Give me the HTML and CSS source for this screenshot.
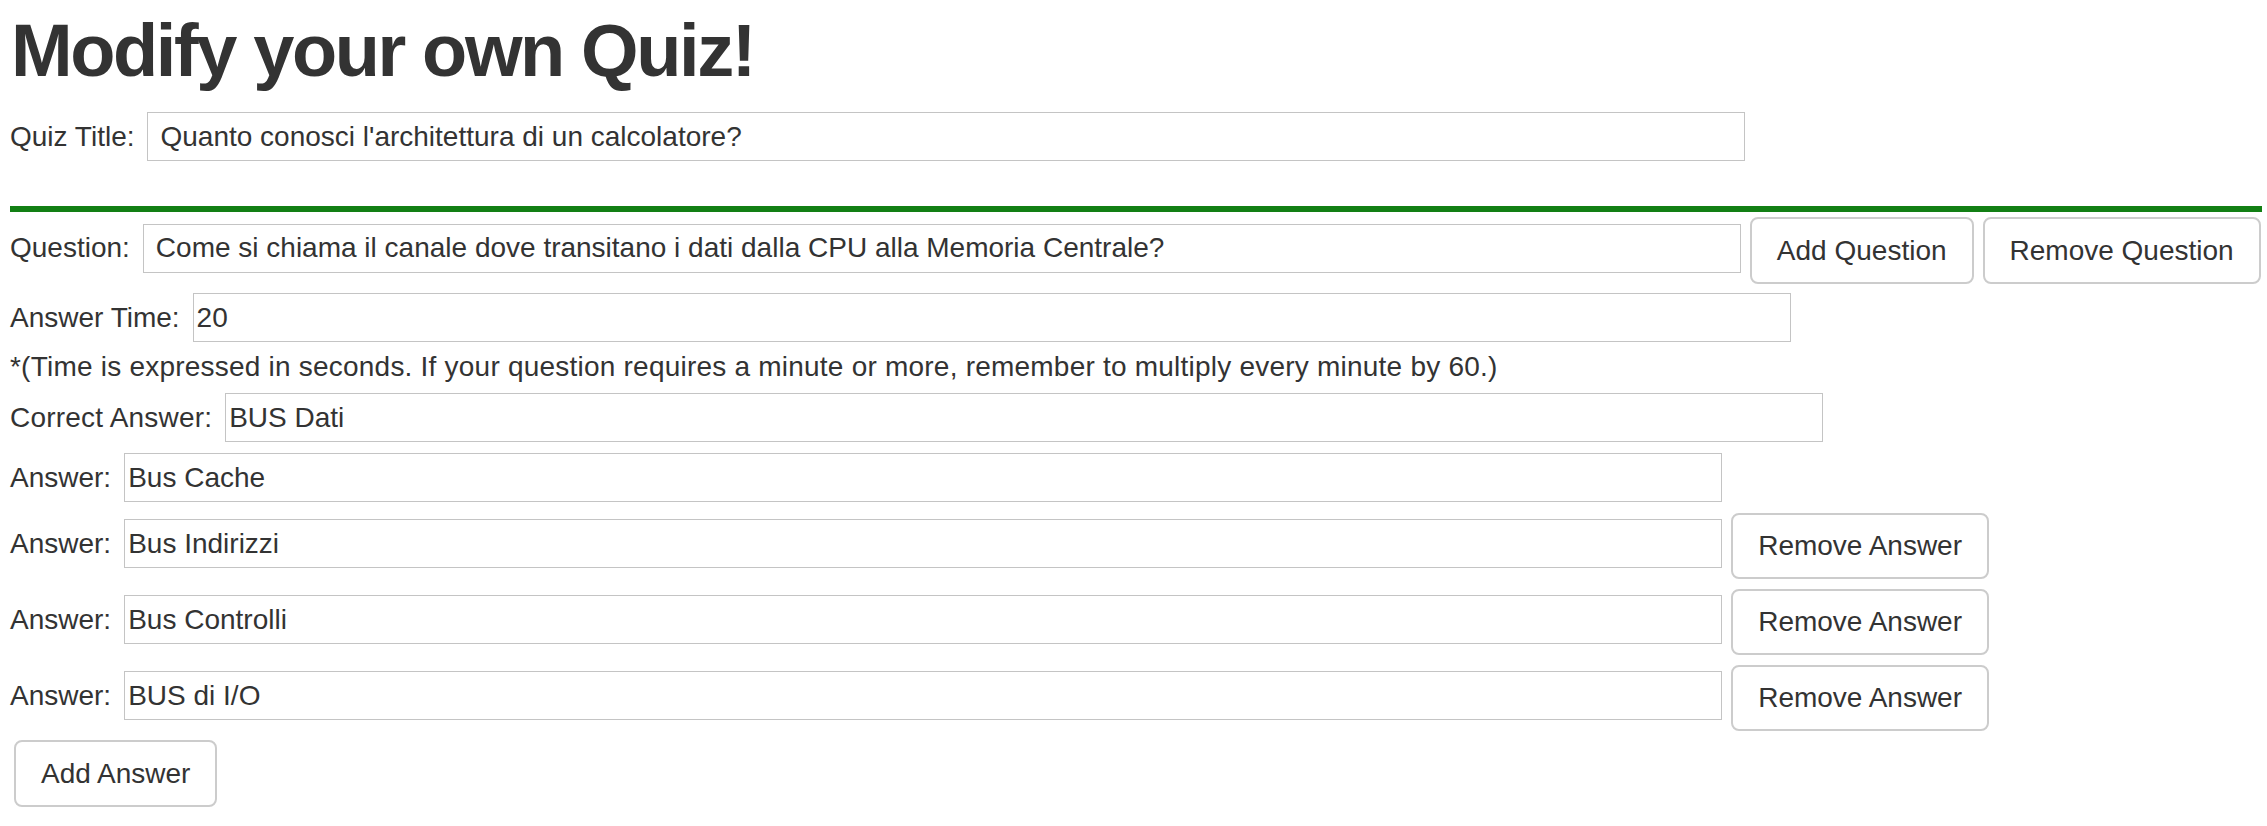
FILE: index.html
```html
<!DOCTYPE html>
<html lang="en">
<head>
<meta charset="utf-8">
<title>Modify your own Quiz!</title>
<link rel="stylesheet" href="styles.css">
</head>
<body>
<h1 class="page-title">Modify your own Quiz!</h1>
<div class="row row-title">
  <label class="lbl">Quiz Title:</label>
  <input class="field field-wide" type="text" value="Quanto conosci l'architettura di un calcolatore?">
</div>
<hr class="divider">
<div class="row row-question">
  <label class="lbl">Question:</label>
  <input class="field field-wide" type="text" value="Come si chiama il canale dove transitano i dati dalla CPU alla Memoria Centrale?">
  <button class="btn" type="button">Add Question</button>
  <button class="btn" type="button">Remove Question</button>
</div>
<div class="row row-time">
  <label class="lbl">Answer Time:</label>
  <input class="field" type="text" value="20">
</div>
<div class="note">*(Time is expressed in seconds. If your question requires a minute or more, remember to multiply every minute by 60.)</div>
<div class="row row-correct">
  <label class="lbl lbl-correct">Correct Answer:</label>
  <input class="field" type="text" value="BUS Dati">
</div>
<div class="row row-answer-first">
  <label class="lbl">Answer:</label>
  <input class="field" type="text" value="Bus Cache">
</div>
<div class="row row-answer">
  <label class="lbl">Answer:</label>
  <input class="field" type="text" value="Bus Indirizzi">
  <button class="btn btn-offset" type="button">Remove Answer</button>
</div>
<div class="row row-answer">
  <label class="lbl">Answer:</label>
  <input class="field" type="text" value="Bus Controlli">
  <button class="btn btn-offset" type="button">Remove Answer</button>
</div>
<div class="row row-answer">
  <label class="lbl">Answer:</label>
  <input class="field" type="text" value="BUS di I/O">
  <button class="btn btn-offset" type="button">Remove Answer</button>
</div>
<div class="actions">
  <button class="btn" type="button">Add Answer</button>
</div>
</body>
</html>
```
FILE: styles.css
```css
html, body {
  background: #ffffff;
}
body {
  margin: 0;
  padding: 0 5px 0 10px;
  font-family: "Liberation Sans", Arial, Helvetica, sans-serif;
  font-size: 28px;
  color: #333333;
}
.page-title {
  margin: 10px 0 0 1px;
  font-size: 74px;
  line-height: 1.1;
  font-weight: bold;
  letter-spacing: -2.4px;
  color: #333333;
}
.row {
  display: flex;
  align-items: center;
}
.lbl {
  margin-right: 13px;
  white-space: nowrap;
  line-height: 1;
}
.lbl-correct {
  letter-spacing: 0.2px;
}
.field {
  box-sizing: border-box;
  width: 1598px;
  height: 49px;
  margin: 0;
  padding: 0 3px;
  border: 1px solid #c4c4c4;
  border-radius: 0;
  font-family: "Liberation Sans", Arial, Helvetica, sans-serif;
  font-size: 28px;
  color: #333333;
  background: #ffffff;
  outline: none;
}
.field-wide {
  padding-left: 12px;
}
.row-title {
  margin-top: 21px;
}
.divider {
  margin: 45px 0 0 0;
  border: 0;
  border-top: 6px solid #127f14;
  height: 0;
}
.btn {
  box-sizing: border-box;
  height: 67px;
  margin: 0 0 0 9px;
  padding: 0 25px;
  border: 2px solid #cccccc;
  border-radius: 8px;
  background: #ffffff;
  font-family: "Liberation Sans", Arial, Helvetica, sans-serif;
  font-size: 28px;
  color: #333333;
  white-space: nowrap;
}
.row-question .btn {
  margin-top: 5px;
  height: 67px;
}
.row-question {
  margin-top: 0;
}
.btn-offset {
  margin-top: 5px;
  height: 66px;
}
.row-time {
  margin-top: 9px;
}
.note {
  margin-top: 5px;
  height: 40px;
  line-height: 40px;
  white-space: nowrap;
  letter-spacing: 0.22px;
}
.row-correct {
  margin-top: 6px;
}
.row-answer-first {
  margin-top: 11px;
}
.row-answer {
  margin-top: 6px;
}
.row-answer + .row-answer {
  margin-top: 5px;
}
.actions {
  margin-top: 9px;
  padding-left: 4px;
}
.actions .btn {
  margin-left: 0;
}
```
